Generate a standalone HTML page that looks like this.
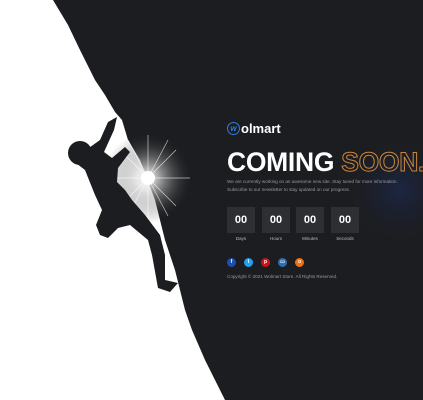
<!DOCTYPE html><html><head><style>
body{margin:0;width:423px;height:400px;overflow:hidden;background:#1c1d20;font-family:"Liberation Sans",sans-serif;position:relative}
svg{position:absolute;left:0;top:0}
.c{position:absolute;left:227px;color:#fff}
.t{top:147px;font-size:26.5px;font-weight:900;letter-spacing:-0.3px;white-space:nowrap}
.t span{color:transparent;-webkit-text-stroke:1px #c8853c}
.p{top:178px;font-size:4.6px;color:#9a9a9a;line-height:8px}
.box{position:absolute;top:207px;width:28px;height:26px;background:#2e2f32;color:#fff;font-weight:900;font-size:11px;text-align:center;line-height:26px}
.lb{position:absolute;top:236px;width:28px;text-align:center;font-size:4.5px;color:#bbb}
.s{position:absolute;top:258px;width:9px;height:9px;border-radius:50%;color:#fff;font-size:5px;font-weight:bold;text-align:center;line-height:9px}
</style></head><body>
<svg width="423" height="400">
<defs><radialGradient id="g" cx="148" cy="178" r="45" gradientUnits="userSpaceOnUse"><stop offset="0" stop-color="#fff"/><stop offset=".25" stop-color="#ddd" stop-opacity=".7"/><stop offset="1" stop-color="#1c1d20" stop-opacity="0"/></radialGradient>
<radialGradient id="b" cx="400" cy="190" r="60" gradientUnits="userSpaceOnUse"><stop offset="0" stop-color="#1c2a55" stop-opacity=".7"/><stop offset="1" stop-color="#1c1d20" stop-opacity="0"/></radialGradient></defs>
<rect width="423" height="400" fill="#1c1d20"/>
<rect x="320" y="100" width="103" height="200" fill="url(#b)"/>
<polygon fill="#fff" points="0,0 53,0 68,25 80,50 95,80 105,95 115,112 122,120 128,140 140,160 155,200 165,240 175,270 180,290 185,310 192,330 205,360 215,380 225,400 0,400"/>
<circle cx="148" cy="178" r="45" fill="url(#g)"/>
<g stroke="#fff" stroke-width=".7" opacity=".7"><line x1="120" y1="150" x2="176" y2="206"/><line x1="176" y1="150" x2="120" y2="206"/><line x1="148" y1="135" x2="148" y2="221"/><line x1="110" y1="178" x2="190" y2="178"/><line x1="128" y1="140" x2="168" y2="216"/><line x1="168" y1="140" x2="128" y2="216"/></g>
<circle cx="148" cy="178" r="7" fill="#fff"/>
<g fill="#1c1d20">
<circle cx="80" cy="153" r="12"/>
<polygon points="72,160 86,150 100,140 108,122 117,117 114,130 104,152 112,158 125,147 130,152 118,168 117,182 125,190 132,200 145,215 160,235 165,255 165,280 178,283 170,292 158,288 152,255 148,240 130,225 118,228 108,238 100,235 96,225 102,210 95,195 85,170"/>
</g>
</svg>
<div class="c" style="top:121px;font-size:13px;font-weight:bold;display:flex;align-items:center"><span style="display:inline-block;width:13px;height:13px;border:1.5px solid #2f7ae5;border-radius:50%;color:#2f7ae5;font-size:8px;text-align:center;line-height:11px;font-style:italic;margin-right:1px;box-sizing:border-box">w</span>olmart</div>
<div class="c t">COMING <span>SOON..</span></div>
<div class="c p">We are currently working on an awesome new site. Stay tuned for more information.<br>Subscribe to our newsletter to stay updated on our progress.</div>
<div class="box" style="left:227px">00</div><div class="box" style="left:262px">00</div><div class="box" style="left:296px">00</div><div class="box" style="left:331px">00</div>
<div class="lb" style="left:227px">Days</div><div class="lb" style="left:262px">Hours</div><div class="lb" style="left:296px">Minutes</div><div class="lb" style="left:331px">Seconds</div>
<div class="s" style="left:227px;background:#1c4fb0">f</div><div class="s" style="left:244px;background:#1da1f2">t</div><div class="s" style="left:261px;background:#d0111b">p</div><div class="s" style="left:278px;background:#2f6db2">▭</div><div class="s" style="left:295px;background:#f2700f">o</div>
<div class="c" style="top:274px;font-size:4.6px;color:#999">Copyright © 2021 Wolmart Store. All Rights Reserved.</div>
</body></html>
